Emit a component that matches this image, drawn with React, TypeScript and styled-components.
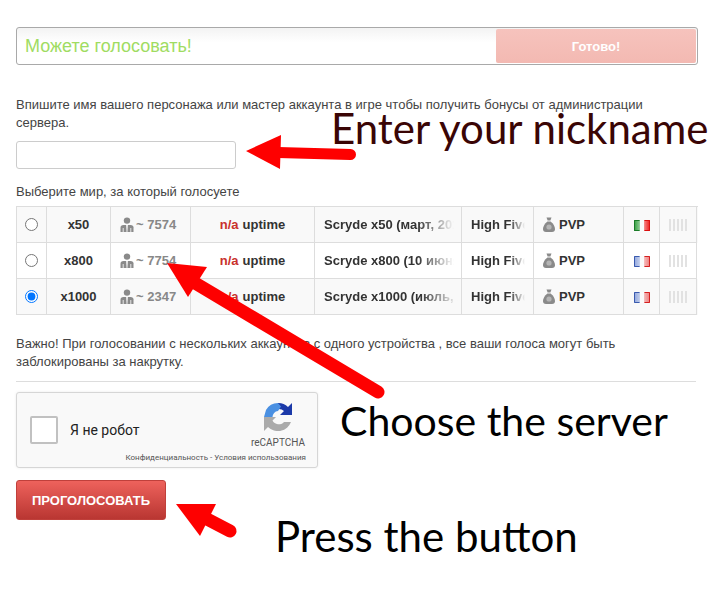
import React from 'react';
import styled, { createGlobalStyle } from 'styled-components';

const GlobalStyle = createGlobalStyle`
  html, body {
    margin: 0;
    padding: 0;
    background: #fff;
    font-family: 'Liberation Sans', Arial, sans-serif;
    color: #444;
  }
`;

const Page = styled.div`
  position: relative;
  width: 717px;
  height: 594px;
  overflow: hidden;
  box-sizing: border-box;
  padding: 27px 19px 0 16px;
`;

const StatusBar = styled.div`
  display: flex;
  align-items: center;
  justify-content: space-between;
  box-sizing: border-box;
  width: 682px;
  height: 38px;
  padding: 1px;
  border: 1px solid #a9a9a9;
  border-radius: 3px;
  background: linear-gradient(#f3f3f3, #fff 40%);
`;

const StatusText = styled.span`
  margin-left: 7px;
  font-size: 18px;
  color: #9fdc62;
`;

const DoneButton = styled.div`
  display: flex;
  align-items: center;
  justify-content: center;
  width: 200px;
  height: 34px;
  border-radius: 2px;
  background: linear-gradient(#f6c3bd, #f3b9b2);
  color: #fff;
  font-size: 13px;
  font-weight: bold;
`;

const Paragraph = styled.p<{ $top: number }>`
  margin: ${p => p.$top}px 0 0;
  width: 680px;
  font-size: 13px;
  line-height: 18px;
  color: #444;
`;

const NickInput = styled.input`
  display: block;
  box-sizing: border-box;
  width: 220px;
  height: 28px;
  margin-top: 9px;
  border: 1px solid #ccc;
  border-radius: 3px;
  background: #fff;
`;

const ServerTable = styled.div`
  width: 681px;
  margin-top: 5px;
  border-top: 1px solid #ddd;
  border-left: 1px solid #ddd;
`;

const Row = styled.div<{ $odd: boolean }>`
  display: grid;
  grid-template-columns: 30px 64px 80px 124px 147px 72px 90px 36px 37px;
  height: 36px;
  background: ${p => (p.$odd ? '#f9f9f9' : '#fff')};
`;

const Cell = styled.div<{ $center?: boolean }>`
  display: flex;
  align-items: center;
  justify-content: ${p => (p.$center ? 'center' : 'flex-start')};
  box-sizing: border-box;
  min-width: 0;
  padding-left: ${p => (p.$center ? 0 : 9)}px;
  border-right: 1px solid #ddd;
  border-bottom: 1px solid #ddd;
  font-size: 13px;
  font-weight: bold;
  color: #333;
  white-space: nowrap;
  overflow: hidden;
`;

const Radio = styled.input`
  width: 13px;
  height: 13px;
  margin: 0;
  accent-color: #0075ff;
`;

const Online = styled.span`
  margin-left: 2px;
  color: #888;
`;

const NotAvailable = styled.span`
  margin-right: 4px;
  color: #c9302c;
`;

const Faded = styled.span<{ $width: number }>`
  display: block;
  width: ${p => p.$width}px;
  overflow: hidden;
  -webkit-mask-image: linear-gradient(to right, #000 72%, transparent);
  mask-image: linear-gradient(to right, #000 72%, transparent);
`;

const BagLabel = styled.span`
  margin-left: 4px;
`;

const FlagIcon = styled.svg`
  margin-top: 2px;
`;

const Divider = styled.div`
  width: 680px;
  height: 1px;
  margin-top: 10px;
  background: #ddd;
`;

const Captcha = styled.div`
  position: relative;
  display: flex;
  align-items: center;
  box-sizing: border-box;
  width: 302px;
  height: 76px;
  margin-top: 10px;
  padding-left: 13px;
  border: 1px solid #d6d6d6;
  border-radius: 3px;
  background: #f9f9f9;
  box-shadow: 0 0 3px rgba(0, 0, 0, 0.08);
`;

const CaptchaBox = styled.div`
  box-sizing: border-box;
  width: 28px;
  height: 28px;
  border: 2px solid #c1c1c1;
  border-radius: 2px;
  background: #fff;
`;

const CaptchaLabel = styled.span`
  margin-left: 12px;
  font-family: Roboto, 'Liberation Sans', sans-serif;
  font-size: 14px;
  color: #222;
`;

const CaptchaBrand = styled.div`
  position: absolute;
  top: 10px;
  right: 12px;
  display: flex;
  flex-direction: column;
  align-items: center;
  gap: 6px;
  font-family: Roboto, 'Liberation Sans', sans-serif;
  font-size: 10px;
  color: #555;
`;

const CaptchaLinks = styled.div`
  position: absolute;
  right: 11px;
  bottom: 5px;
  font-family: Roboto, 'Liberation Sans', sans-serif;
  font-size: 8px;
  color: #555;
`;

const VoteButton = styled.button`
  display: block;
  box-sizing: border-box;
  width: 150px;
  height: 40px;
  margin-top: 12px;
  border: 1px solid #c0403b;
  border-radius: 3px;
  background: linear-gradient(#ee625c, #b93632);
  color: #fff;
  font-family: 'Liberation Sans', Arial, sans-serif;
  font-size: 13px;
  font-weight: bold;
  padding: 0;
`;

const Overlay = styled.svg`
  position: absolute;
  top: 0;
  left: 0;
  pointer-events: none;
`;

const Note = styled.span<{ $x: number; $y: number; $size: number; $color: string }>`
  position: absolute;
  left: ${p => p.$x}px;
  top: ${p => p.$y}px;
  font-family: Lato, 'Open Sans', sans-serif;
  font-size: ${p => p.$size}px;
  line-height: 1.2;
  color: ${p => p.$color};
  white-space: nowrap;
`;

const UserIcon = () => (
  <svg width="14" height="15" viewBox="0 0 14 15">
    <circle cx="7" cy="3.6" r="3.2" fill="#8a8a8a" />
    <path d="M0.5 15V10.5Q0.5 8 3.5 8H10.5Q13.5 8 13.5 10.5V15Z" fill="#8a8a8a" />
    <path d="M6.2 8H7.8L7.4 15H6.6Z" fill="#fff" />
    <path d="M3.2 11V15M10.8 11V15" stroke="#fff" strokeWidth="0.8" />
  </svg>
);

const BagIcon = () => (
  <svg width="12" height="15" viewBox="0 0 12 15">
    <path d="M3.5 0.5H8.5L7.4 3.5H4.6Z" fill="#8a8a8a" />
    <path d="M4.4 4.4H7.6Q12 8 12 12Q12 15 9 15H3Q0 15 0 12Q0 8 4.4 4.4Z" fill="#8a8a8a" />
    <circle cx="6" cy="10" r="2.6" fill="#b5b5b5" />
  </svg>
);

const Flag = ({ id, left, leftEdge, right, rightEdge }: { id: string; left: string; leftEdge: string; right: string; rightEdge: string }) => (
  <FlagIcon width="16" height="11" viewBox="0 0 16 11">
    <defs>
      <linearGradient id={id}>
        <stop offset="0" stopColor={left} />
        <stop offset="0.34" stopColor={left} stopOpacity="0.55" />
        <stop offset="0.36" stopColor="#fafafa" />
        <stop offset="0.64" stopColor="#fafafa" />
        <stop offset="0.66" stopColor={right} stopOpacity="0.55" />
        <stop offset="1" stopColor={right} />
      </linearGradient>
    </defs>
    <rect width="16" height="11" fill={`url(#${id})`} />
    <path d="M5.5 0.5H0.5V10.5H5.5" fill="none" stroke={leftEdge} />
    <path d="M10.5 0.5H15.5V10.5H10.5" fill="none" stroke={rightEdge} />
  </FlagIcon>
);

const Bars = () => (
  <svg width="18" height="12" viewBox="0 0 18 12">
    {[0, 4, 8, 12, 16].map(x => (
      <rect key={x} x={x} y="0" width="2" height="12" fill="#e2e2e2" />
    ))}
  </svg>
);

const RecaptchaLogo = () => (
  <svg width="28" height="28" viewBox="0 0 28 28">
    <path d="M14 0A14 14 0 0 1 24 4L28 0V12H16L20 8A7.500 7.500 0 0 0 14 6Z" fill="#1c3aa9" />
    <path d="M14 0A14 14 0 0 0 2 7L0 14H8.500A6 6 0 0 1 14 8L17 3.500Z" fill="#4a90e2" />
    <path d="M0 14H12L8.500 17.500A7 7 0 0 0 20 19H27A14 14 0 0 1 4 24L0 28Z" fill="#ababab" />
  </svg>
);

const servers = [
  { rate: 'x50', online: '7574', name: 'Scryde x50 (март, 2019)', nameWidth: 130, country: 'it', checked: false },
  { rate: 'x800', online: '7754', name: 'Scryde x800 (10 июня)', nameWidth: 130, country: 'fr', checked: false },
  { rate: 'x1000', online: '2347', name: 'Scryde x1000 (июль, 2019)', nameWidth: 134, country: 'fr', checked: true },
];

export default function App() {
  return (
    <Page>
      <GlobalStyle />
      <StatusBar>
        <StatusText>Можете голосовать!</StatusText>
        <DoneButton>Готово!</DoneButton>
      </StatusBar>

      <Paragraph $top={31}>
        Впишите имя вашего персонажа или мастер аккаунта в игре чтобы получить бонусы от администрации сервера.
      </Paragraph>
      <NickInput type="text" />
      <Paragraph $top={14}>Выберите мир, за который голосуете</Paragraph>

      <ServerTable>
        {servers.map((server, index) => (
          <Row key={server.rate} $odd={index % 2 === 0}>
            <Cell $center>
              <Radio type="radio" name="server" defaultChecked={server.checked} />
            </Cell>
            <Cell $center>{server.rate}</Cell>
            <Cell>
              <UserIcon />
              <Online>~ {server.online}</Online>
            </Cell>
            <Cell $center>
              <NotAvailable>n/a</NotAvailable> uptime
            </Cell>
            <Cell>
              <Faded $width={server.nameWidth}>{server.name}</Faded>
            </Cell>
            <Cell>
              <Faded $width={54}>High Five</Faded>
            </Cell>
            <Cell>
              <BagIcon />
              <BagLabel>PVP</BagLabel>
            </Cell>
            <Cell $center>
              {server.country === 'it' ? (
                <Flag id={`flag-${index}`} left="#2f9e3a" leftEdge="#1a7a28" right="#f01818" rightEdge="#d81010" />
              ) : (
                <Flag id={`flag-${index}`} left="#8ea4dc" leftEdge="#3a5aae" right="#ee7a7a" rightEdge="#d42020" />
              )}
            </Cell>
            <Cell $center>
              <Bars />
            </Cell>
          </Row>
        ))}
      </ServerTable>

      <Paragraph $top={20}>
        Важно! При голосовании с нескольких аккаунтов с одного устройства , все ваши голоса могут быть заблокированы за накрутку.
      </Paragraph>
      <Divider />

      <Captcha>
        <CaptchaBox />
        <CaptchaLabel>Я не робот</CaptchaLabel>
        <CaptchaBrand>
          <RecaptchaLogo />
          <span>reCAPTCHA</span>
        </CaptchaBrand>
        <CaptchaLinks>Конфиденциальность - Условия использования</CaptchaLinks>
      </Captcha>
      <VoteButton type="button">ПРОГОЛОСОВАТЬ</VoteButton>

      <Overlay width="717" height="594" viewBox="0 0 717 594" fill="#fe0000" stroke="#fe0000" strokeLinecap="round">
        <path d="M246 151L281 135L280 169Z" stroke="none" />
        <path d="M278 152.500L350.500 154.500" fill="none" strokeWidth="11" />
        <path d="M167 263L207 267L188 297Z" stroke="none" />
        <path d="M190 280L378 392" fill="none" strokeWidth="13" />
        <path d="M176 504H216L200 536Z" stroke="none" />
        <path d="M207 519L230 531" fill="none" strokeWidth="13" />
      </Overlay>
      <Note $x={331} $y={103} $size={42} $color="#3a0505">Enter your nickname</Note>
      <Note $x={340} $y={396} $size={41} $color="#000">Choose the server</Note>
      <Note $x={275} $y={511} $size={42} $color="#000">Press the button</Note>
    </Page>
  );
}
